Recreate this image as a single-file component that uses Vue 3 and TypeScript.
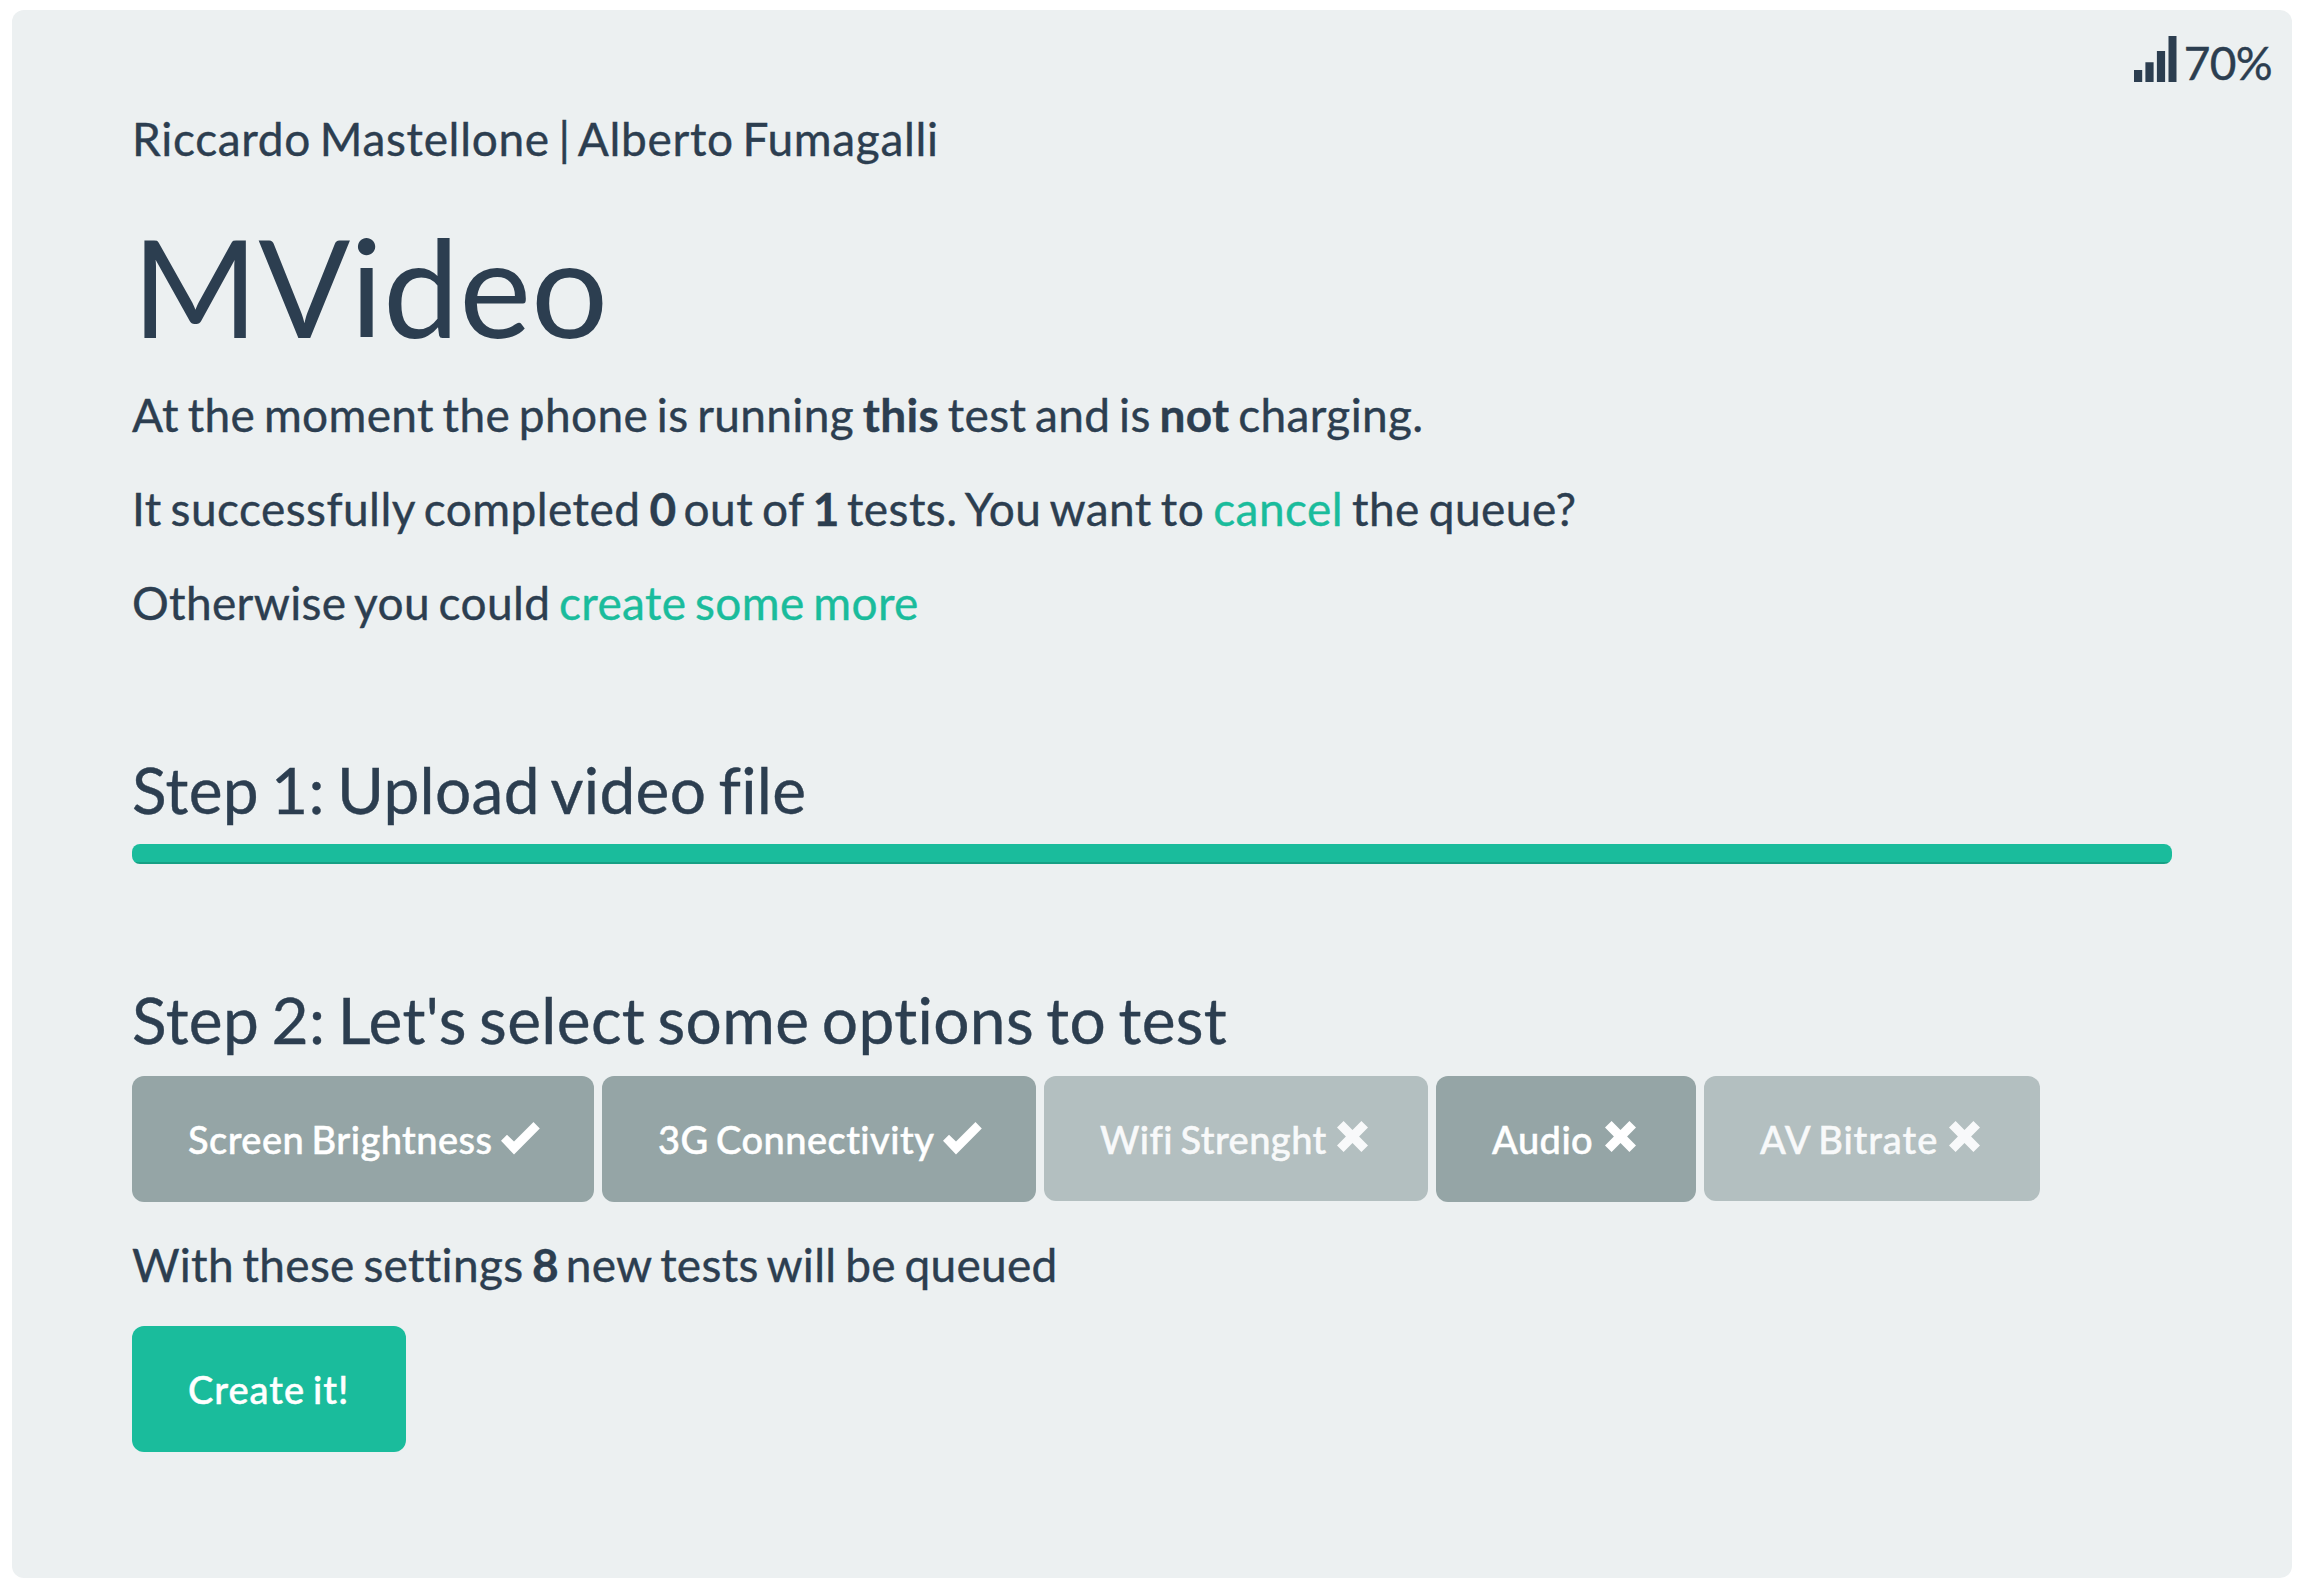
<script setup lang="ts">
interface Option {
  label: string
  icon: 'check' | 'cross'
  disabled: boolean
  width: number
}

const battery = 70
const completed = 0
const total = 1
const queued = 8
const progress = 100

const options: Option[] = [
  { label: 'Screen Brightness', icon: 'check', disabled: false, width: 462 },
  { label: '3G Connectivity', icon: 'check', disabled: false, width: 434 },
  { label: 'Wifi Strenght', icon: 'cross', disabled: true, width: 384 },
  { label: 'Audio', icon: 'cross', disabled: false, width: 260 },
  { label: 'AV Bitrate', icon: 'cross', disabled: true, width: 336 },
]
</script>

<template>
  <main class="panel">
    <div class="status">
      <svg class="signal" width="43" height="46" viewBox="0 0 43 46">
        <path d="M0 34h8.2v12H0zM11.4 26.3h8.2V46h-8.2zM22.9 15h8.2v31h-8.2zM34.5 0h8V46h-8z" />
      </svg>
      <span>{{ battery }}%</span>
    </div>

    <p class="authors">Riccardo Mastellone | Alberto Fumagalli</p>
    <h1>MVideo</h1>
    <p>At the moment the phone is running <b>this</b> test and is <b>not</b> charging.</p>
    <p class="tests">It successfully completed <b class="num">{{ completed }}</b> out of <b class="num">{{ total }}</b> tests. You want to <a>cancel</a> the queue?</p>
    <p>Otherwise you could <a>create some more</a></p>

    <h4 class="step-one">Step 1: Upload video file</h4>
    <div class="progress"><div class="bar" :style="{ width: progress + '%' }"></div></div>

    <h4 class="step-two">Step 2: Let's select some options to test</h4>
    <div class="options">
      <button
        v-for="o in options"
        :key="o.label"
        class="btn"
        :class="[o.icon, { off: o.disabled }]"
        :style="{ width: o.width + 'px' }"
      >
        <span>{{ o.label }}</span>
        <svg v-if="o.icon === 'check'" class="icon" width="39" height="33" viewBox="0 0 39 33">
          <path d="M0 18.7L6 12.8L13 19.4L32.5 0L38.8 6.6L13 32.6Z" />
        </svg>
        <svg v-else class="icon" width="31" height="31" viewBox="0 0 31 31">
          <path d="M6.6 0L15.5 8.9L24.4 0L31 6.6L22.1 15.5L31 24.4L24.4 31L15.5 22.1L6.6 31L0 24.4L8.9 15.5L0 6.6Z" />
        </svg>
      </button>
    </div>

    <p class="summary">With these settings <b class="num">{{ queued }}</b> new tests will be queued</p>
    <button class="btn create"><span>Create it!</span></button>
  </main>
</template>

<style>
body {
  margin: 0;
  background: #fff;
}
</style>

<style scoped>
.panel {
  position: relative;
  box-sizing: border-box;
  width: 2280px;
  height: 1568px;
  margin: 10px 0 0 12px;
  padding: 96px 120px 0;
  border-radius: 12px;
  background: #ecf0f1;
  color: #2c3e50;
  font-family: Lato, "Liberation Sans", sans-serif;
  font-size: 46px;
  line-height: 65px;
  font-variant-ligatures: none;
  display: flow-root;
}
.status {
  position: absolute;
  top: 20px;
  right: 20px;
  display: flex;
  align-items: flex-start;
  gap: 6.6px;
  letter-spacing: -0.7px;
  -webkit-text-stroke: 0.4px currentColor;
}
.signal {
  margin-top: 6px;
  fill: #2c3e50;
}
p {
  margin: 0 0 29px;
  white-space: nowrap;
  letter-spacing: 0.35px;
  word-spacing: -3.4px;
  -webkit-text-stroke: 0.4px currentColor;
}
b {
  font-weight: 700;
}
.num {
  margin-right: -2px;
}
a {
  color: #1abc9c;
}
.authors {
  margin-bottom: 46px;
  letter-spacing: 0.68px;
  word-spacing: -3.75px;
}
.tests {
  letter-spacing: 0.44px;
  word-spacing: -3.2px;
}
.summary {
  letter-spacing: 0.3px;
}
h1 {
  margin: 0 0 28px;
  font-size: 136px;
  line-height: 137px;
  font-weight: 400;
}
h4 {
  font-size: 64px;
  line-height: 71px;
  font-weight: 400;
  white-space: nowrap;
  letter-spacing: 0.3px;
  word-spacing: -4.5px;
  -webkit-text-stroke: 0.4px currentColor;
}
.step-one {
  margin: 119px 0 19px;
}
.step-two {
  margin: 120px 0 21px;
  letter-spacing: 0.36px;
  word-spacing: -4.4px;
}
.progress {
  height: 20px;
  border-radius: 8px;
  overflow: hidden;
}
.bar {
  height: 100%;
  background: #1abc9c;
  box-shadow: inset 0 -2px 0 rgba(0, 0, 0, 0.15);
}
.options {
  display: flex;
  gap: 8px;
  margin-bottom: 30px;
}
.btn {
  display: flex;
  justify-content: space-between;
  box-sizing: border-box;
  height: 126px;
  padding: 0 56px;
  border: 0;
  border-radius: 12px;
  background: #95a5a6;
  color: #fff;
  font-family: inherit;
  font-size: 38px;
  font-weight: 500;
  font-variant-ligatures: none;
  line-height: 126px;
  letter-spacing: 0.45px;
  word-spacing: -2.65px;
  white-space: nowrap;
  -webkit-text-stroke: 0.5px currentColor;
}
.check {
  padding-right: 54px;
}
.cross {
  padding-right: 60px;
}
.icon {
  flex: none;
  margin-top: 46px;
  fill: #fff;
}
.cross .icon {
  margin-top: 45px;
}
.off {
  height: 125px;
  opacity: 0.65;
}
.off:last-child {
  letter-spacing: 0.95px;
}
.create {
  width: 274px;
  background: #1abc9c;
  letter-spacing: 1px;
}
</style>
